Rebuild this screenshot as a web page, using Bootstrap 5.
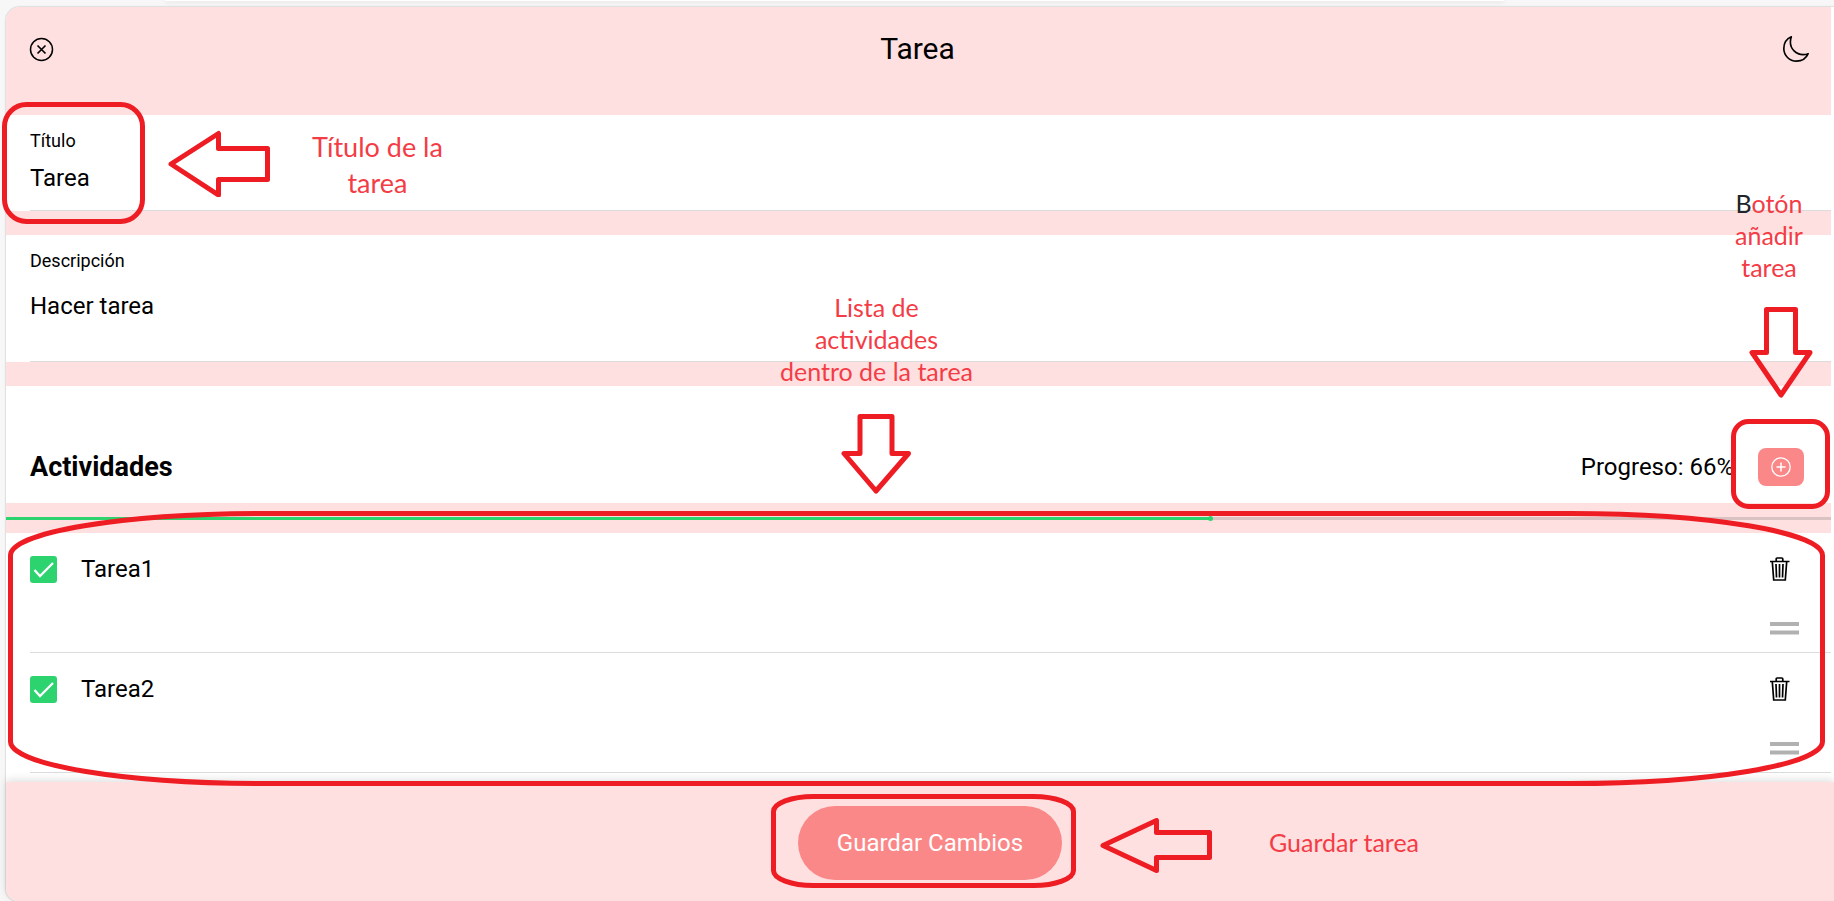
<!DOCTYPE html>
<html lang="es">
<head>
<meta charset="utf-8">
<meta name="viewport" content="width=device-width, initial-scale=1">
<title>Tarea</title>
<link href="https://cdn.jsdelivr.net/npm/bootstrap@5.3.0/dist/css/bootstrap.min.css" rel="stylesheet">
<style>
  :root { --rosa: #ffe0e0; --boton: #fb8888; --verde: #2dd36f; --marca: #ee1c23; --linea: #dcdcdc; }
  body { font-family: Roboto, sans-serif; font-size: 24px; line-height: 34px; color: #000; background: #f7f7f7; overflow-x: hidden; }
  .page-wrap { min-height: 100vh; padding: 7px 0 0 6px; }
  .behind { position: absolute; top: 0; left: 9%; right: 18%; height: 1px; background: #fff; box-shadow: 0 1px 4px #0003; }
  .sheet { background: #fff; border-radius: 14px 0 0 12px; box-shadow: 0 0 2px #0005; position: relative; }
  .sheet-main { background: var(--rosa); margin-right: 3px; border-radius: 14px 0 0 0; }
  .topbar { height: 108px; padding: 0 20px 24px 23px; }
  .topbar h1 { font-size: 30px; line-height: 36px; font-weight: 400; }
  .icon-btn { background: none; border: 0; padding: 0; color: #000; line-height: 0; }
  .field { position: relative; background: #fff; padding: 14px 0 0 24px; margin-bottom: 24px; }
  .field label { display: block; font-size: 18px; line-height: 24px; }
  .field-line { border-bottom: 1px solid var(--linea); }
  .plain { display: block; width: 100%; border: 0; padding: 0; background: none; color: #000; line-height: 34px; resize: none; outline: 0; overflow: hidden; }
  .plain-title { height: 34px; margin-top: 8px; margin-bottom: 15px; }
  .plain-desc { height: 72px; margin-top: 16px; }
  .activities { position: relative; background: #fff; padding: 62px 27px 17px 24px; }
  .activities h2 { font-size: 27px; line-height: 38px; font-weight: 700; }
  .add-btn { width: 46px; height: 38px; border: 0; border-radius: 8px; background: var(--boton); color: #fff; padding: 0; line-height: 0; }
  .bar-area { padding: 14px 0 13px; }
  .track { height: 3px; background: #dac2c2; }
  .track-fill { height: 3px; background: var(--verde); position: relative; }
  .track-fill::after { content: ""; position: absolute; right: -2px; top: -1px; width: 5px; height: 5px; border-radius: 50%; background: var(--verde); }
  .tasks { position: relative; background: #fff; padding-bottom: 9px; }
  .task { margin-left: 24px; height: 120px; border-bottom: 1px solid var(--linea); padding: 19px 32px 0 0; }
  .task .form-check-input { width: 27px; height: 27px; margin: 0; border: 0; border-radius: 3px; background-color: #fff; }
  .task .form-check-input:checked { background-color: var(--verde); background-size: 27px;
    background-image: url("data:image/svg+xml,%3Csvg xmlns='http://www.w3.org/2000/svg' viewBox='0 0 27 27'%3E%3Cpath d='M4.500 14l5.500 6L23 7' fill='none' stroke='%23fff' stroke-width='2.300'/%3E%3C/svg%3E"); }
  .task-tools { gap: 38px; padding-top: 4px; }
  .bottom { position: relative; height: 119px; background: var(--rosa); border-radius: 0 0 0 12px; padding: 24px 4px 0 24px; box-shadow: 0 -2px 8px #0002; }
  .save-btn { width: 264px; height: 74px; border: 0; border-radius: 37px; background: var(--boton); color: #fff; padding: 0; }
  /* Marcas y notas dibujadas encima de la interfaz */
  .ring, .callout { position: absolute; pointer-events: none; z-index: 3; }
  .ring svg { display: block; width: 100%; height: 100%; overflow: visible; }
  .ring rect { x: 2.5px; y: 2.5px; width: calc(100% - 5px); height: calc(100% - 5px); fill: none; stroke: var(--marca); stroke-width: 5; }
  .ring-title { left: -4px; top: -13px; width: 143px; height: 122px; }
  .ring-add { right: 1px; bottom: -6px; width: 99px; height: 90px; }
  .ring-list { left: 2px; right: 6px; top: -22px; bottom: -4px; }
  .ring-save { left: -27px; right: -14px; top: -12px; bottom: -8px; }
  .callout { font-family: Lato, sans-serif; font-size: 25px; line-height: 32px; color: #f43c46; text-align: center; }
  .callout svg { display: block; flex: none; fill: none; stroke: var(--marca); stroke-width: 5; stroke-linejoin: round; }
  .callout-title { left: 162px; top: 14px; gap: 42px; font-size: 27px; line-height: 36px; }
  .callout-list { left: calc(50% - 143px); width: 202px; top: 56px; gap: 27px; }
  .callout-add { right: 18px; top: 72px; gap: 24px; }
  .callout-save { left: 100%; top: 12px; margin-left: 38px; gap: 57px; white-space: nowrap; }
</style>
</head>
<body>
<div class="page-wrap d-flex flex-column">
  <div class="behind"></div>
  <div class="sheet d-flex flex-column flex-grow-1">
    <main class="sheet-main d-flex flex-column flex-grow-1">
      <header class="topbar d-flex align-items-center justify-content-between">
        <button class="icon-btn" type="button" aria-label="Cerrar">
          <svg width="25" height="25" viewBox="0 0 25 25" fill="none" stroke="currentColor" stroke-width="1.5"><circle cx="12.5" cy="12.5" r="11"/><path d="M8.500 8.500l8 8M16.500 8.500l-8 8" stroke-width="1.7"/></svg>
        </button>
        <h1 class="m-0">Tarea</h1>
        <button class="icon-btn" type="button" aria-label="Modo oscuro">
          <svg width="30" height="30" viewBox="0 0 512 512" fill="none" stroke="currentColor" stroke-width="28" stroke-linejoin="round"><path d="M160 136c0-30.620 4.510-61.610 16-88C99.570 81.270 48 159.320 48 248c0 119.290 96.710 216 216 216 88.680 0 166.730-51.570 200-128-26.390 11.490-57.380 16-88 16-119.290 0-216-96.710-216-216z"/></svg>
        </button>
      </header>

      <section class="field">
        <div class="field-line">
          <label for="titulo">Título</label>
          <input class="plain plain-title" id="titulo" type="text" value="Tarea">
        </div>
        <div class="ring ring-title"><svg aria-hidden="true"><rect rx="22" ry="22"/></svg></div>
        <div class="callout callout-title d-flex align-items-start">
          <svg width="102" height="68" viewBox="0 0 102 68"><path d="M3 35L50.500 4.500V19.500H99.500V50.500H50.500V66z"/></svg>
          <div>Título de la<br>tarea</div>
        </div>
        <div class="callout callout-add d-flex flex-column align-items-center">
          <div><span class="text-dark">B</span>otón<br>añadir<br>tarea</div>
          <svg class="ms-4" width="64" height="92" viewBox="0 0 64 92"><path d="M17.500 2.500H46.500V45.500H61L32 88L3 45.500H17.500z"/></svg>
        </div>
      </section>

      <section class="field">
        <div class="field-line">
          <label for="descripcion">Descripción</label>
          <textarea class="plain plain-desc" id="descripcion">Hacer tarea</textarea>
        </div>
        <div class="callout callout-list d-flex flex-column align-items-center">
          <div>Lista de<br>actividades<br>dentro de la tarea</div>
          <svg width="72" height="82" viewBox="0 0 72 82"><path d="M19 2.500H51V39.500H67.500L35 77L3 39.500H19z"/></svg>
        </div>
      </section>

      <section class="activities d-flex align-items-center">
        <h2 class="m-0 me-auto">Actividades</h2>
        <span class="me-4">Progreso: 66%</span>
        <button class="add-btn" type="button" aria-label="Añadir tarea">
          <svg width="20" height="20" viewBox="0 0 20 20" fill="none" stroke="currentColor" stroke-width="1.3"><circle cx="10" cy="10" r="9.200"/><path d="M10 5.500v9M5.500 10h9" stroke-width="1.5"/></svg>
        </button>
        <div class="ring ring-add"><svg aria-hidden="true"><rect rx="15" ry="15"/></svg></div>
      </section>

      <div class="bar-area">
        <div class="track" role="progressbar" aria-label="Progreso" aria-valuenow="66" aria-valuemin="0" aria-valuemax="100">
          <div class="track-fill" style="width:66%"></div>
        </div>
      </div>

      <section class="tasks flex-grow-1">
        <div class="task d-flex align-items-start">
          <div class="d-flex align-items-center flex-grow-1">
            <input class="form-check-input" type="checkbox" id="t1" checked>
            <label class="ps-4" for="t1">Tarea1</label>
          </div>
          <div class="task-tools d-flex flex-column">
            <button class="icon-btn" type="button" aria-label="Borrar Tarea1"><svg class="d-block" width="29" height="27" viewBox="0 0 29 27" fill="none" stroke="currentColor" stroke-width="1.7"><path d="M0 5.500H19.500M2.300 5.500L3.700 24H15.300L16.700 5.500M6.200 5V3Q6.200 2 7.200 2H11.800Q12.800 2 12.800 3V5M6 8L6.500 21.500M9.500 8V21.500M13 8L12.500 21.500"/></svg></button>
            <svg width="29" height="14" viewBox="0 0 29 14" aria-hidden="true"><path d="M0 3h29M0 11.500h29" stroke="#b1b1b1" stroke-width="4"/></svg>
          </div>
        </div>
        <div class="task d-flex align-items-start">
          <div class="d-flex align-items-center flex-grow-1">
            <input class="form-check-input" type="checkbox" id="t2" checked>
            <label class="ps-4" for="t2">Tarea2</label>
          </div>
          <div class="task-tools d-flex flex-column">
            <button class="icon-btn" type="button" aria-label="Borrar Tarea2"><svg class="d-block" width="29" height="27" viewBox="0 0 29 27" fill="none" stroke="currentColor" stroke-width="1.7"><path d="M0 5.500H19.500M2.300 5.500L3.700 24H15.300L16.700 5.500M6.200 5V3Q6.200 2 7.200 2H11.800Q12.800 2 12.800 3V5M6 8L6.500 21.500M9.500 8V21.500M13 8L12.500 21.500"/></svg></button>
            <svg width="29" height="14" viewBox="0 0 29 14" aria-hidden="true"><path d="M0 3h29M0 11.500h29" stroke="#b1b1b1" stroke-width="4"/></svg>
          </div>
        </div>
        <div class="ring ring-list"><svg aria-hidden="true"><rect rx="252" ry="42"/></svg></div>
      </section>
    </main>

    <footer class="bottom d-flex justify-content-center align-items-start">
      <div class="position-relative">
        <button class="save-btn" type="button">Guardar Cambios</button>
        <div class="ring ring-save"><svg aria-hidden="true"><rect rx="40" ry="15"/></svg></div>
        <div class="callout callout-save d-flex align-items-start">
          <svg width="112" height="56" viewBox="0 0 112 56"><path d="M3 27.500L56.500 2.500V14.500H109.500V39.500H56.500V52.500z"/></svg>
          <span class="pt-1 mt-1">Guardar tarea</span>
        </div>
      </div>
    </footer>
  </div>
</div>
<script src="https://cdn.jsdelivr.net/npm/bootstrap@5.3.0/dist/js/bootstrap.bundle.min.js"></script>
</body>
</html>
